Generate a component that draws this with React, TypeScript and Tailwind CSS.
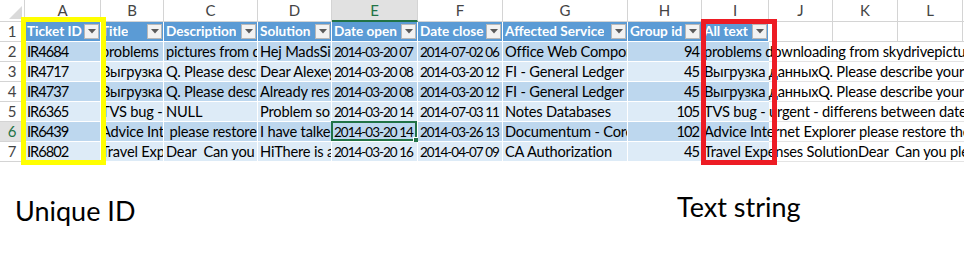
import React from "react";

const LETTERS = ["A", "B", "C", "D", "E", "F", "G", "H", "I", "J", "K", "L"];
const HEADERS = [
  "Ticket ID",
  "Title",
  "Description",
  "Solution",
  "Date open",
  "Date close",
  "Affected Service",
  "Group id",
  "All text",
];

const ROWS: string[][] = [
  ["IR4684", "problems", "pictures from d", "Hej MadsSir", "2014-03-20 07", "2014-07-02 06", "Office Web Compor", "94", "problems downloading from skydrivepictures"],
  ["IR4717", "Выгрузка", "Q. Please desc", "Dear Alexey", "2014-03-20 08", "2014-03-20 12", "FI - General Ledger", "45", "Выгрузка данныхQ. Please describe your issue"],
  ["IR4737", "Выгрузка", "Q. Please desc", "Already res", "2014-03-20 08", "2014-03-20 12", "FI - General Ledger", "45", "Выгрузка данныхQ. Please describe your issue"],
  ["IR6365", "TVS bug -", "NULL", "Problem so", "2014-03-20 14", "2014-07-03 11", "Notes Databases", "105", "TVS bug - urgent - differens between dates"],
  ["IR6439", "Advice Int", " please restore", "I have talke", "2014-03-20 14", "2014-03-26 13", "Documentum - Core", "102", "Advice Internet Explorer please restore the"],
  ["IR6802", "Travel Exp", "Dear  Can you p", "HiThere is a", "2014-03-20 16", "2014-04-07 09", "CA Authorization", "45", "Travel Expenses SolutionDear  Can you please"],
];

function Dropdown() {
  return (
    <div className="w-[15px] h-[15px] shrink-0 mr-[1px] bg-[#f2f2f2] border border-[#b8b8b8] flex items-center justify-center">
      <svg width="8" height="5" viewBox="0 0 8 5">
        <polygon points="0,0 8,0 4,4.5" fill="#5a5a5a" />
      </svg>
    </div>
  );
}

function cellClass(ci: number, bg: string, sel: boolean) {
  let c = bg + " border-r border-b border-white flex items-center whitespace-pre relative ";
  if (ci === 4 || ci === 5) c += "text-[13.5px] tracking-[-1px] ";
  else if (ci === 0 || ci === 7) c += "tracking-[-1px] ";
  else c += "tracking-[-0.2px] ";
  c += ci === 7 ? "justify-end pr-[2px] " : "pl-[2px] ";
  if (ci === 1) c += "[text-indent:-2px] ";
  c += ci === 4 && sel ? "overflow-visible" : "overflow-hidden";
  return c;
}

export default function App() {
  return (
    <div
      className="w-[964px] h-[277px] bg-white overflow-hidden text-black"
      style={{ fontFamily: "Lato, 'Open Sans', sans-serif" }}
    >
      <div className="relative">
        <div className="grid grid-cols-[25px_76px_63px_94px_74px_86px_85px_125px_74px_67px_64px_65px_65px_1fr] grid-rows-[22px_repeat(7,20px)] text-[14.67px]">
          {/* Column letters */}
          <div className="border-r border-b border-[#d4d4d4] bg-white flex items-end justify-end pr-[2px] pb-[2px]">
            <svg width="13" height="13" viewBox="0 0 13 13">
              <polygon points="13,0 13,13 0,13" fill="#dadada" />
            </svg>
          </div>
          {LETTERS.map((l) =>
            l === "E" ? (
              <div
                key={l}
                className="bg-[#e1e1e1] border-r border-[#d4d4d4] border-b-2 border-b-[#217346] flex items-center justify-center text-[#217346] text-[15px]"
              >
                {l}
              </div>
            ) : (
              <div
                key={l}
                className="border-r border-b border-[#d4d4d4] flex items-center justify-center text-[#444444] text-[15px]"
              >
                {l}
              </div>
            )
          )}
          <div className="border-b border-[#d4d4d4]" />

          {/* Row 1: table header */}
          <div className="border-r border-b border-[#d4d4d4] flex items-center justify-center text-[#444444] text-[15px]">
            1
          </div>
          {HEADERS.map((h, i) => (
            <div
              key={h}
              className="bg-[#5b9bd5] border-r border-b border-white flex items-center justify-between overflow-hidden"
            >
              <span
                className={
                  "font-bold text-white text-[13.6px] whitespace-nowrap overflow-hidden " +
                  (i === 1 ? "pl-0" : "pl-[2px]")
                }
              >
                {h}
              </span>
              <Dropdown />
            </div>
          ))}
          <div className="border-r border-b border-[#d4d4d4]" />
          <div className="border-r border-b border-[#d4d4d4]" />
          <div className="border-r border-b border-[#d4d4d4]" />
          <div className="border-b border-[#d4d4d4]" />

          {/* Data rows */}
          {ROWS.map((r, ri) => {
            const rowNum = ri + 2;
            const bg = ri % 2 === 0 ? "bg-[#bdd7ee]" : "bg-[#ddebf7]";
            const selected = rowNum === 6;
            return (
              <React.Fragment key={ri}>
                <div
                  className={
                    "border-r border-b border-[#d4d4d4] flex items-center justify-center text-[15px] " +
                    (selected ? "bg-[#e1e1e1] text-[#217346]" : "text-[#444444]")
                  }
                >
                  {rowNum}
                </div>
                {r.slice(0, 8).map((c, ci) => (
                  <div key={ci} className={cellClass(ci, bg, selected)}>
                    <span className="pt-[1px]">{c}</span>
                    {ci === 4 && selected && (
                      <div className="absolute -left-[1px] -top-[1px] right-0 bottom-0 border-2 border-[#217346]">
                        <div className="absolute -right-[4px] -bottom-[4px] w-[6px] h-[6px] bg-[#217346] border border-white" />
                      </div>
                    )}
                  </div>
                ))}
                <div
                  className={
                    bg +
                    " border-b border-white flex items-center whitespace-pre overflow-visible pl-[2px] tracking-[-0.2px]"
                  }
                >
                  <span className="pt-[1px]">{r[8]}</span>
                </div>
                <div className="border-b border-[#e4e4e4]" />
                <div className="border-b border-[#e4e4e4]" />
                <div className="border-b border-[#e4e4e4]" />
                <div className="border-b border-[#e4e4e4]" />
              </React.Fragment>
            );
          })}
        </div>

        {/* Highlight boxes */}
        <div className="absolute left-[21px] top-[17px] w-[85px] h-[148px] border-[5px] border-[#ffff00]" />
        <div className="absolute left-[701px] top-[19px] w-[76px] h-[146px] border-[5px] border-[#ed1c24]" />
      </div>

      {/* Labels */}
      <div className="flex items-start pt-[30px] text-[27px] leading-[30px] text-black">
        <div className="w-[677px] pl-[15px] pt-[4px]">Unique ID</div>
        <div>Text string</div>
      </div>
    </div>
  );
}
